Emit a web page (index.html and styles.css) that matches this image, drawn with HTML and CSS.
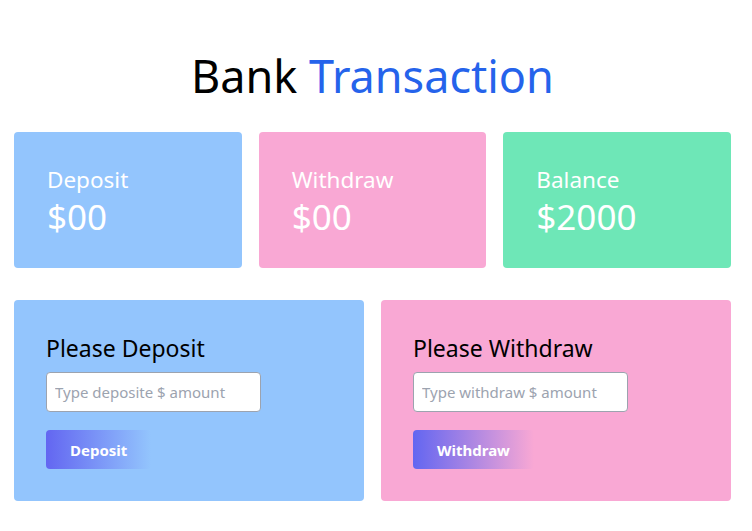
FILE: index.html
```html
<!DOCTYPE html>
<html>
<head>
<meta charset="utf-8">
<link rel="stylesheet" href="styles.css">
</head>
<body>
<main class="page">
  <h1 class="title">Bank <span class="accent">Transaction</span></h1>
  <section class="stats">
    <div class="stat blue">
      <div class="stat-label">Deposit</div>
      <div class="stat-value">$00</div>
    </div>
    <div class="stat pink">
      <div class="stat-label">Withdraw</div>
      <div class="stat-value">$00</div>
    </div>
    <div class="stat green">
      <div class="stat-label">Balance</div>
      <div class="stat-value">$2000</div>
    </div>
  </section>
  <section class="forms">
    <div class="form-card blue">
      <h2 class="form-title">Please Deposit</h2>
      <input class="amount" type="text" placeholder="Type deposite $ amount">
      <button class="btn">Deposit</button>
    </div>
    <div class="form-card pink">
      <h2 class="form-title">Please Withdraw</h2>
      <input class="amount" type="text" placeholder="Type withdraw $ amount">
      <button class="btn">Withdraw</button>
    </div>
  </section>
</main>
</body>
</html>
```
FILE: styles.css
```css
* { box-sizing: border-box; }
html, body { margin: 0; padding: 0; background: #fff; }
body { font-family: "Noto Sans", "Open Sans", sans-serif; }

.page {
  width: 717px;
  margin-left: 14px;
  padding-top: 52px;
}

.title {
  margin: 0 0 32px;
  font-size: 45px;
  line-height: 48px;
  font-weight: 400;
  text-align: center;
  color: #000;
}
.accent { color: #2563eb; }

.stats {
  display: grid;
  grid-template-columns: repeat(3, 1fr);
  gap: 17px;
}
.stat {
  height: 136px;
  border-radius: 4px;
  padding: 31px 33px;
  color: #fff;
}
.stat-label { font-size: 22.5px; line-height: 33px; }
.stat-value { font-size: 35px; line-height: 42px; }

.blue { background: #93c5fd; }
.pink { background: #f9a8d4; }
.green { background: #6ee7b7; }

.forms {
  display: grid;
  grid-template-columns: 1fr 1fr;
  gap: 17px;
  margin-top: 32px;
}
.form-card {
  border-radius: 4px;
  padding: 32px;
  display: flex;
  flex-direction: column;
  align-items: flex-start;
}
.form-title {
  margin: 0 0 8px;
  font-size: 23px;
  line-height: 32px;
  font-weight: 400;
  color: #000;
}
.amount {
  width: 215px;
  height: 40px;
  border: 1px solid #9ca3af;
  border-radius: 4px;
  padding: 0 8px;
  font-family: inherit;
  font-size: 15px;
  color: #374151;
  background: #fff;
  outline: none;
}
.amount::placeholder { color: #9ca3af; }

.btn {
  margin-top: 18px;
  height: 39px;
  padding: 0 24px;
  border: none;
  border-radius: 4px;
  background: linear-gradient(to right, #6366f1, rgba(99, 102, 241, 0));
  color: #fff;
  font-family: inherit;
  font-weight: 700;
  font-size: 15px;
  cursor: pointer;
}
```
